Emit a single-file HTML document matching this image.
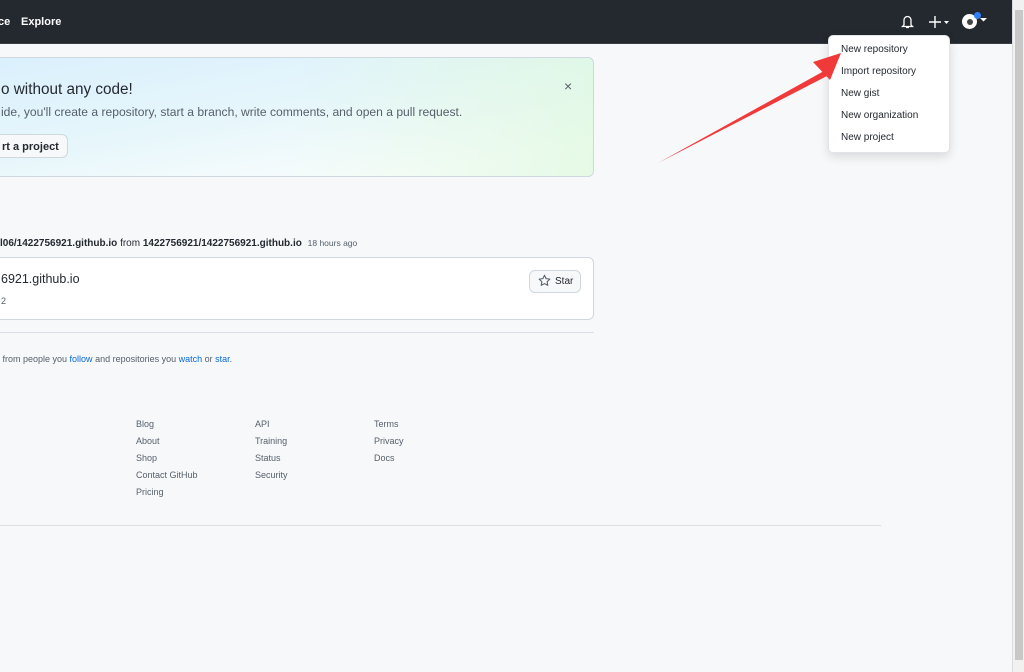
<!DOCTYPE html>
<html><head><meta charset="utf-8"><style>
*{margin:0;padding:0;box-sizing:border-box}
body{width:1024px;height:672px;overflow:hidden;background:#f6f8fa;font-family:"Liberation Sans",sans-serif;color:#24292f;position:relative}
.hdr{position:absolute;left:0;top:0;width:1012px;height:44px;background:#24292f;border-bottom:1px solid #3a3f46}
.hdr .t{position:absolute;top:16px;color:#fff;font-weight:bold;font-size:11px}
.sb{position:absolute;right:0;top:0;width:12px;height:672px;background:#f1f1f1;border-left:1px solid #ddd}
.sb div{position:absolute;left:2px;top:10px;width:8px;height:650px;background:#c8c8c8}
.banner{position:absolute;left:-10px;top:57px;width:604px;height:120px;border:1px solid #d0d7de;border-radius:6px;background:linear-gradient(170deg,#daf0fd 0%,#e6f6fb 45%,#fafdfd 85%),#fff;overflow:hidden}
.banner::after{content:"";position:absolute;inset:0;background:linear-gradient(100deg,rgba(255,255,255,0) 50%,rgba(220,248,220,.7) 100%)}
.banner *{position:relative;z-index:1}
.abs{position:absolute}
.btn{position:absolute;border:1px solid #d0d7de;border-radius:6px;background:#f6f8fa;font-size:11px;font-weight:bold}
.card{position:absolute;left:-10px;top:257px;width:604px;height:63px;border:1px solid #d0d7de;border-radius:6px;background:#fff}
.f{position:absolute;font-size:9px;color:#57606a}
.menu{position:absolute;left:828px;top:35px;width:122px;height:118px;background:#fff;border:1px solid #e1e4e8;border-radius:5px;box-shadow:0 4px 10px rgba(0,0,0,.12)}
.menu div{position:absolute;left:12px;font-size:10px;color:#24292f}
a{color:#0969da;text-decoration:none}
</style></head><body>
<div class="hdr">
<span class="t" style="left:-2px">ce</span><span class="t" style="left:21px">Explore</span>
<svg class="abs" style="left:901px;top:14px" width="13" height="15" viewBox="0 0 13 15"><path d="M3 11V6a3.5 3.5 0 0 1 7 0v5l1.5 1.5h-10z M5 13.5h3" fill="none" stroke="#fff" stroke-width="1.3"/></svg>
<svg class="abs" style="left:928px;top:15px" width="24" height="14"><path d="M7 1v12M1 7h12" stroke="#fff" stroke-width="1.4"/><path d="M16 6h5l-2.5 3z" fill="#fff"/></svg>
<div class="abs" style="left:962px;top:14px;width:15px;height:15px;border-radius:50%;background:#fff"></div>
<div class="abs" style="left:967px;top:19px;width:6px;height:6px;border-radius:50%;background:#444"></div>
<div class="abs" style="left:974px;top:12px;width:7px;height:7px;border-radius:50%;background:#2f81f7"></div>
<svg class="abs" style="left:980px;top:18px" width="8" height="5"><path d="M0 0h7l-3.5 3.5z" fill="#fff"/></svg>
</div>
<div class="sb"><div></div></div>
<div class="banner">
<div class="abs" style="left:10px;top:23px;font-size:15.3px">o without any code!</div>
<div class="abs" style="left:10px;top:47px;font-size:12.1px;color:#57606a">ide, you'll create a repository, start a branch, write comments, and open a pull request.</div>
<div class="btn" style="left:-20px;top:76px;width:97px;height:24px;padding:6px 0 0 30px">rt a project</div>
<div class="abs" style="left:573px;top:20px;font-size:14px;color:#57606a">×</div>
</div>
<div class="abs" style="left:0;top:238px;font-size:10px;font-weight:bold">l06/1422756921.github.io <span style="font-weight:normal">from</span> 1422756921/1422756921.github.io <span style="font-weight:normal;font-size:8.5px;color:#57606a;margin-left:3px">18 hours ago</span></div>
<div class="card">
<div class="abs" style="left:10px;top:14px;font-size:12.5px">6921.github.io</div>
<div class="abs" style="left:10px;top:38px;font-size:9px;color:#57606a">2</div>
<div class="btn" style="left:538px;top:12px;width:52px;height:23px;font-weight:normal;font-size:10px;padding:5px 0 0 25px;background:#f6f8fa">Star</div>
<svg class="abs" style="left:547px;top:16px" width="13" height="13" viewBox="0 0 16 16"><path d="M8 1.5l2 4.2 4.6.6-3.4 3.2.9 4.5L8 11.8 3.9 14l.9-4.5L1.4 6.3 6 5.7z" fill="none" stroke="#57606a" stroke-width="1.3" stroke-linejoin="round"/></svg>
</div>
<div class="abs" style="left:0;top:332px;width:594px;height:1px;background:#d8dee4"></div>
<div class="abs" style="left:0;top:354px;font-size:9px;color:#57606a">&nbsp;from people you <a>follow</a> and repositories you <a>watch</a> or <a>star</a>.</div>
<div class="f" style="left:136px;top:419px">Blog</div><div class="f" style="left:136px;top:436px">About</div><div class="f" style="left:136px;top:453px">Shop</div><div class="f" style="left:136px;top:470px">Contact GitHub</div><div class="f" style="left:136px;top:487px">Pricing</div>
<div class="f" style="left:255px;top:419px">API</div><div class="f" style="left:255px;top:436px">Training</div><div class="f" style="left:255px;top:453px">Status</div><div class="f" style="left:255px;top:470px">Security</div>
<div class="f" style="left:374px;top:419px">Terms</div><div class="f" style="left:374px;top:436px">Privacy</div><div class="f" style="left:374px;top:453px">Docs</div>
<div class="abs" style="left:0;top:525px;width:881px;height:1px;background:#d8dee4"></div>
<div class="menu">
<div style="top:8px">New repository</div><div style="top:30px">Import repository</div><div style="top:52px">New gist</div><div style="top:74px">New organization</div><div style="top:96px">New project</div>
</div>
<svg class="abs" style="left:650px;top:45px" width="200" height="125"><path d="M8 118L174 26L177 31z" fill="#f03a3a"/><path d="M191 8L163 17L180 35z" fill="#f03a3a"/></svg>
</body></html>
